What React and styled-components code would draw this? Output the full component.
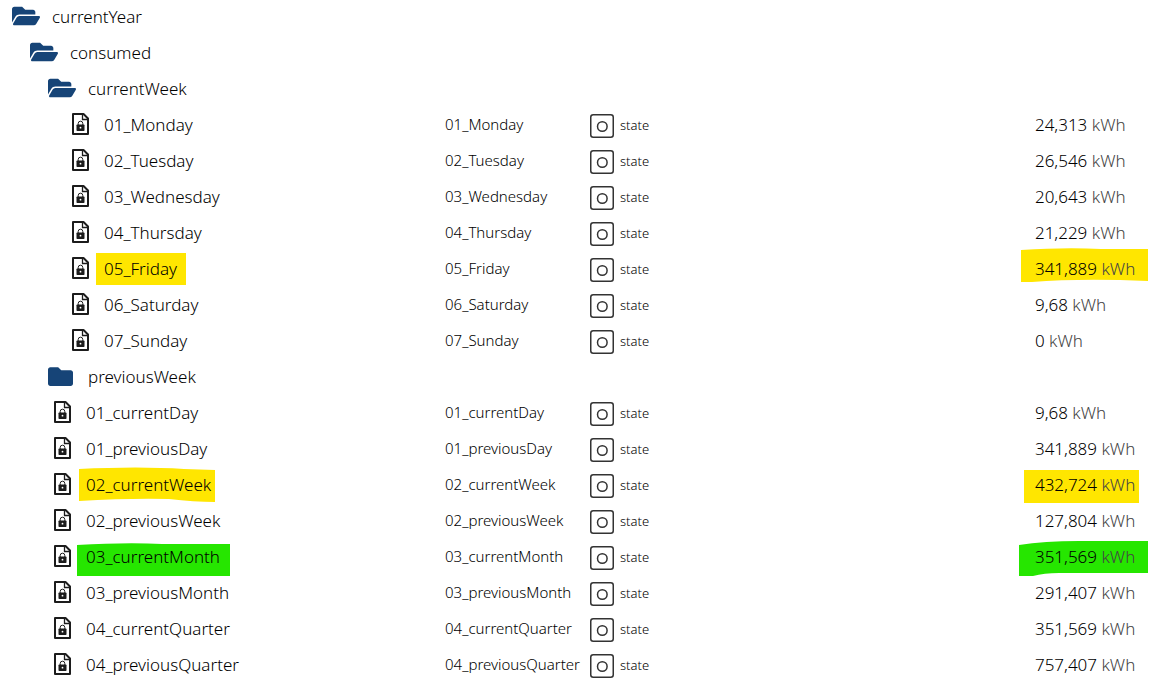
import React from 'react';
import styled, { createGlobalStyle } from 'styled-components';
import { FaFolder, FaFolderOpen } from 'react-icons/fa';

const GlobalStyle = createGlobalStyle`
  body {
    margin: 0;
    background: #fff;
    color: #000;
    font-family: 'Noto Sans', 'Open Sans', sans-serif;
    font-weight: 300;
  }
`

const Tree = styled.table`
  width: 100%;
  table-layout: fixed;
  border-collapse: collapse;
`

const Col = styled.col`
  width: ${(p) => p.$width};
`

const Row = styled.tr`
  height: 36px;
`

const Cell = styled.td`
  height: 32px;
  padding: 0 0 4px;
  white-space: nowrap;
`

const NameCell = styled(Cell)`
  padding-left: ${(p) => p.$indent}px;
  font-size: 17px;
`

const ValueCell = styled(Cell)`
  font-size: 17px;
`

const IdCell = styled(Cell)`
  font-size: 15px;
`

const StateCell = styled(Cell)`
  height: 36px;
  padding: 0;
  font-size: 13px;
`

const Line = styled.div`
  display: flex;
  align-items: center;
  line-height: 24px;
`

const Label = styled.span`
  padding-top: 2px;
`

const FolderIcon = styled.span`
  display: flex;
  width: 40px;
  color: #164477;
`

const FileIcon = styled.svg`
  width: 18px;
  height: 22px;
  margin-right: 14px;
`

const State = styled.div`
  display: flex;
  align-items: center;
  gap: 6px;
`

const StateLabel = styled.span`
  padding-bottom: 2px;
`

const Mark = styled.span`
  position: relative;
`

const Stroke = styled.svg`
  position: absolute;
  z-index: -1;
  top: ${(p) => p.$top}px;
  left: ${(p) => p.$left}px;
`

const Unit = styled.span`
  color: #444;
`

const YELLOW = '#ffe600';
const GREEN = '#26e600';

const strokes = {
  friday: { top: -4, left: -8, w: 90, h: 33, color: YELLOW, d: 'M0 0H90V32H0Z' },
  fridayValue: { top: -9, left: -14, w: 128, h: 35, color: YELLOW, d: 'M0 2Q45 -1 80 1L127 1V33Q60 30 11 34H0Z' },
  week: { top: -6, left: -7, w: 137, h: 36, color: YELLOW, d: 'M0 2Q60 -1 105 2L136 3V35Q115 35 90 32Q50 31 0 34Z' },
  weekValue: { top: -3, left: -11, w: 115, h: 33, color: YELLOW, d: 'M0 0H115V33H0Z' },
  month: { top: -2, left: -9, w: 154, h: 34, color: GREEN, d: 'M0 2Q50 -1 85 1L153 1V33H0Z' },
  monthValue: { top: -5, left: -16, w: 130, h: 37, color: GREEN, d: 'M0 5Q25 1 60 1H129V33H40Q25 33 14 36H0Z' },
};

const rows = [
  { folder: 'open', name: 'currentYear', depth: 0 },
  { folder: 'open', name: 'consumed', depth: 1 },
  { folder: 'open', name: 'currentWeek', depth: 2 },
  { name: '01_Monday', depth: 3, value: '24,313' },
  { name: '02_Tuesday', depth: 3, value: '26,546' },
  { name: '03_Wednesday', depth: 3, value: '20,643' },
  { name: '04_Thursday', depth: 3, value: '21,229' },
  { name: '05_Friday', depth: 3, value: '341,889', mark: 'friday' },
  { name: '06_Saturday', depth: 3, value: '9,68' },
  { name: '07_Sunday', depth: 3, value: '0' },
  { folder: 'closed', name: 'previousWeek', depth: 2 },
  { name: '01_currentDay', depth: 2, value: '9,68' },
  { name: '01_previousDay', depth: 2, value: '341,889' },
  { name: '02_currentWeek', depth: 2, value: '432,724', mark: 'week' },
  { name: '02_previousWeek', depth: 2, value: '127,804' },
  { name: '03_currentMonth', depth: 2, value: '351,569', mark: 'month' },
  { name: '03_previousMonth', depth: 2, value: '291,407' },
  { name: '04_currentQuarter', depth: 2, value: '351,569' },
  { name: '04_previousQuarter', depth: 2, value: '757,407' },
];

function Highlight({ stroke, children }) {
  const s = strokes[stroke];
  if (!s) return <span>{children}</span>;
  return (
    <Mark>
      <Stroke $top={s.top} $left={s.left} width={s.w} height={s.h} aria-hidden="true">
        <path d={s.d} fill={s.color} />
      </Stroke>
      {children}
    </Mark>
  );
}

function LockedFile() {
  return (
    <FileIcon viewBox="0 0 18 22" aria-hidden="true">
      <path d="M1 1H11.500L16 5.500V21H1Z" fill="none" stroke="#1c1c1c" strokeWidth="2" strokeLinejoin="round" />
      <path d="M10.500 1V6.500H16" fill="none" stroke="#1c1c1c" strokeWidth="1.300" />
      <rect x="4.500" y="11.500" width="8" height="6.500" rx="0.800" fill="#1c1c1c" />
      <path d="M6.200 12V10.500a2.300 2.300 0 0 1 4.600 0V12" fill="none" stroke="#1c1c1c" strokeWidth="1" />
      <circle cx="8.500" cy="14.700" r="0.900" fill="#fff" />
    </FileIcon>
  );
}

function StateIcon() {
  return (
    <svg width="24" height="24" viewBox="0 0 24 24" fill="none" stroke="#333" strokeWidth="1.500" aria-hidden="true">
      <rect x="0.750" y="0.750" width="22.500" height="22.500" rx="2.500" />
      <circle cx="12.300" cy="12.500" r="4.800" />
    </svg>
  );
}

function FolderRow({ row }) {
  return (
    <Row>
      <NameCell colSpan={4} $indent={12 + row.depth * 18}>
        <Line>
          <FolderIcon>
            {row.folder === 'open' ? <FaFolderOpen size={28} /> : <FaFolder size={25} />}
          </FolderIcon>
          <Label>{row.name}</Label>
        </Line>
      </NameCell>
    </Row>
  );
}

function StateRow({ row }) {
  return (
    <Row>
      <NameCell $indent={18 + row.depth * 18}>
        <Line>
          <LockedFile />
          <Label>
            <Highlight stroke={row.mark}>{row.name}</Highlight>
          </Label>
        </Line>
      </NameCell>
      <IdCell>{row.name}</IdCell>
      <StateCell>
        <State>
          <StateIcon />
          <StateLabel>state</StateLabel>
        </State>
      </StateCell>
      <ValueCell>
        <Highlight stroke={row.mark && `${row.mark}Value`}>
          {row.value} <Unit>kWh</Unit>
        </Highlight>
      </ValueCell>
    </Row>
  );
}

export default function App() {
  return (
    <>
      <GlobalStyle />
      <Tree>
        <colgroup>
          <Col $width="445px" />
          <Col $width="145px" />
          <Col $width="auto" />
          <Col $width="121px" />
        </colgroup>
        <tbody>
          {rows.map((row) =>
            row.folder ? <FolderRow key={row.name} row={row} /> : <StateRow key={row.name} row={row} />
          )}
        </tbody>
      </Tree>
    </>
  )
}
